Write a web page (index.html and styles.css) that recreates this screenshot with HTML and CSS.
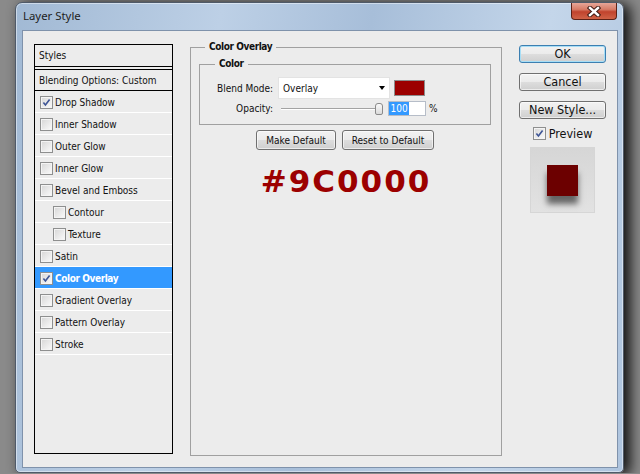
FILE: index.html
```html
<!DOCTYPE html>
<html lang="en">
<head>
  <meta charset="UTF-8">
  <meta name="viewport" content="width=device-width, initial-scale=1.0">
  <title>Layer Style</title>
  <link rel="stylesheet" href="styles.css">
</head>
<body>
  <div class="window">
    <div class="titlebar">
      <span class="title">Layer Style</span>
      <div class="close">
        <svg width="14" height="11" viewBox="0 0 14 11">
          <path d="M3 2 L11 9 M11 2 L3 9" stroke="#3d1a14" stroke-width="4.4" stroke-linecap="square" fill="none"/>
          <path d="M3 2 L11 9 M11 2 L3 9" stroke="#ffffff" stroke-width="2.4" stroke-linecap="square" fill="none"/>
        </svg>
      </div>
    </div>
    <div class="client">
      <div class="styles-list">
        <div class="list-head">Styles</div>
        <div class="list-blend">Blending Options: Custom</div>
        <div class="list-item"><span class="check"><svg width="9" height="9" viewBox="0 0 9 9"><path d="M1.4 4.6 L3.4 7 L7.6 1.4" fill="none" stroke="#3e5596" stroke-width="1.6"/></svg></span>Drop Shadow</div>
        <div class="list-item"><span class="check"></span>Inner Shadow</div>
        <div class="list-item"><span class="check"></span>Outer Glow</div>
        <div class="list-item"><span class="check"></span>Inner Glow</div>
        <div class="list-item"><span class="check"></span>Bevel and Emboss</div>
        <div class="list-item sub"><span class="check"></span>Contour</div>
        <div class="list-item sub"><span class="check"></span>Texture</div>
        <div class="list-item"><span class="check"></span>Satin</div>
        <div class="list-item active"><span class="check"><svg width="9" height="9" viewBox="0 0 9 9"><path d="M1.4 4.6 L3.4 7 L7.6 1.4" fill="none" stroke="#3e5596" stroke-width="1.6"/></svg></span>Color Overlay</div>
        <div class="list-item"><span class="check"></span>Gradient Overlay</div>
        <div class="list-item"><span class="check"></span>Pattern Overlay</div>
        <div class="list-item"><span class="check"></span>Stroke</div>
      </div>

      <fieldset class="group">
        <legend>Color Overlay</legend>
        <fieldset class="subgroup">
          <legend>Color</legend>
          <div class="field-row blend-row">
            <label class="field-label">Blend Mode:</label>
            <div class="select">Overlay<span class="arrow"></span></div>
            <div class="swatch"></div>
          </div>
          <div class="field-row opacity-row">
            <label class="field-label">Opacity:</label>
            <div class="slider"><span class="track"></span><span class="thumb"></span></div>
            <div class="num-input"><span class="selected">100</span></div>
            <span class="pct">%</span>
          </div>
        </fieldset>
        <div class="default-buttons">
          <button class="btn btn-make">Make Default</button>
          <button class="btn btn-reset">Reset to Default</button>
        </div>
        <div class="hex">#9C0000</div>
      </fieldset>

      <div class="actions">
        <button class="btn btn-big btn-default">OK</button>
        <button class="btn btn-big">Cancel</button>
        <button class="btn btn-big">New Style...</button>
        <label class="preview-toggle"><span class="check"><svg width="9" height="9" viewBox="0 0 9 9"><path d="M1.4 4.6 L3.4 7 L7.6 1.4" fill="none" stroke="#3e5596" stroke-width="1.6"/></svg></span>Preview</label>
        <div class="preview-box"><div class="preview-swatch"></div></div>
      </div>
    </div>
  </div>
</body>
</html>
```

FILE: styles.css
```css
body {
  margin: 0;
  background-color: #8a8a8a;
  font-family: "DejaVu Sans Condensed", "DejaVu Sans", sans-serif;
  font-size: 10px;
  color: #111;
  overflow: hidden;
}

/* window frame */
.window {
  margin: 2px 0 0 15px;
  width: 609px;
  height: 471px;
  box-sizing: border-box;
  border: 1px solid #4f5a69;
  border-radius: 7px 7px 5px 5px;
  padding: 0 5px 4px 6px;
  display: flex;
  flex-direction: column;
  background: linear-gradient(100deg, #a1b9d4 0%, #bdd0e6 30%, #a7bed9 52%, #c4d6ea 78%, #aec4de 100%);
  box-shadow: inset 0 0 0 1px rgba(255, 255, 255, 0.45), 6px 2px 14px rgba(0, 0, 0, 0.9);
}
.titlebar {
  height: 27px;
  display: flex;
  justify-content: space-between;
  align-items: flex-start;
}
.title {
  padding: 5px 0 0 1px;
  font-family: "Noto Sans", sans-serif;
  font-size: 11.4px;
  color: #1e1e1e;
}
.close {
  width: 46px;
  height: 17px;
  margin-right: 1px;
  box-sizing: border-box;
  border: 1px solid #5b2116;
  border-top: none;
  border-radius: 0 0 4px 4px;
  background: linear-gradient(#e6a698 0%, #d77b66 40%, #c0432d 55%, #cf6246 100%);
  display: flex;
  align-items: center;
  justify-content: center;
}
.client {
  flex: 1;
  background-color: #ececec;
  border: 1px solid #7f92ab;
  display: grid;
  grid-template-columns: 139px 312px 87px;
  column-gap: 17px;
  align-items: start;
  padding: 13px 0 0 11px;
}

/* styles list */
.styles-list {
  height: 410px;
  box-sizing: border-box;
  border: 1px solid #000;
}
.list-head {
  height: 21px;
  line-height: 22px;
  padding-left: 4px;
  border-bottom: 1px solid #000;
}
.list-blend {
  height: 20px;
  line-height: 21px;
  padding-left: 4px;
  margin-top: 2px;
  border-top: 1px solid #000;
  border-bottom: 1px solid #000;
}
.list-item {
  height: 21px;
  border-bottom: 1px solid #fff;
  display: flex;
  align-items: center;
  gap: 2px;
  padding-left: 5px;
  padding-top: 1px;
  box-sizing: border-box;
  height: 22px;
}
.list-item.sub {
  padding-left: 18px;
}
.list-item.active {
  background-color: #3399ff;
  color: #fff;
  font-weight: bold;
  letter-spacing: -0.4px;
}

.check {
  width: 13px;
  height: 13px;
  box-sizing: border-box;
  border: 1px solid #8e8f8f;
  background: linear-gradient(135deg, #d6d6d6, #fbfbfb);
  box-shadow: inset 0 0 0 1px #f4f4f4;
  display: inline-flex;
  align-items: center;
  justify-content: center;
  flex-shrink: 0;
}

/* color overlay group */
fieldset {
  margin: 0;
  min-width: 0;
  border: 1px solid #a0a0a0;
}
legend {
  font-weight: bold;
  letter-spacing: -0.4px;
  line-height: 12px;
  padding: 0 4px;
}
.group {
  margin-top: -3px;
  height: 415px;
  box-sizing: border-box;
  padding: 5px 10px 0 8px;
}
.group > legend {
  margin-left: 6px;
}
.subgroup {
  padding: 0 0 7px 0;
}
.subgroup > legend {
  margin-left: 15px;
}
.field-row {
  display: flex;
  align-items: center;
}
.blend-row {
  height: 22px;
  margin-top: 7px;
}
.opacity-row {
  height: 17px;
  margin-top: 1px;
}
.field-label {
  width: 73px;
  text-align: right;
}
.select {
  width: 112px;
  height: 22px;
  box-sizing: border-box;
  margin-left: 5px;
  background-color: #fff;
  border: 1px solid #e3e3e3;
  display: flex;
  align-items: center;
  justify-content: space-between;
  padding: 0 4px 0 4px;
}
.arrow {
  width: 0;
  height: 0;
  border-left: 3.5px solid transparent;
  border-right: 3.5px solid transparent;
  border-top: 4px solid #000;
}
.swatch {
  width: 31px;
  height: 16px;
  box-sizing: border-box;
  margin-left: 4px;
  background-color: #9c0000;
  border: 1px solid #8c8c8c;
}
.slider {
  width: 103px;
  margin-left: 8px;
  display: flex;
  align-items: center;
}
.track {
  width: 96px;
  height: 1px;
  background-color: #a3a3a3;
  border-bottom: 1px solid #fff;
}
.thumb {
  width: 8px;
  height: 12px;
  box-sizing: border-box;
  margin-left: -2px;
  border: 1px solid #8a8a8a;
  border-radius: 3px 3px 2px 2px;
  background: linear-gradient(#fafafa, #dadada);
}
.num-input {
  width: 38px;
  height: 15px;
  box-sizing: border-box;
  margin-left: 4px;
  background-color: #fff;
  border: 1px solid #b6bdc8;
  display: flex;
  align-items: center;
}
.selected {
  background-color: #3399ff;
  color: #fff;
  padding: 0 1.5px;
  line-height: 13px;
}
.pct {
  margin-left: 3px;
}
.default-buttons {
  margin-top: 5px;
  display: flex;
  justify-content: center;
  gap: 6px;
}
.hex {
  margin-top: 15px;
  text-align: center;
  font-family: "DejaVu Sans", sans-serif;
  font-weight: bold;
  font-size: 31px;
  line-height: 32px;
  letter-spacing: 2px;
  padding-left: 2px;
  color: #9c0000;
}

/* buttons */
.btn {
  height: 20px;
  padding: 0;
  box-sizing: border-box;
  font-family: "DejaVu Sans Condensed", "DejaVu Sans", sans-serif;
  font-size: 10px;
  color: #111;
  border: 1px solid #707070;
  border-radius: 3px;
  background: linear-gradient(#f2f2f2 0%, #ebebeb 50%, #dddddd 51%, #cfcfcf 100%);
  box-shadow: inset 0 0 0 1px rgba(255, 255, 255, 0.6);
}
.btn-make {
  width: 80px;
}
.btn-reset {
  width: 92px;
}

/* right column */
.actions {
  display: flex;
  flex-direction: column;
  margin-top: 1px;
  gap: 10px;
}
.btn-big {
  height: 18px;
  font-size: 12.5px;
  line-height: 16px;
}
.btn-default {
  border-color: #3c7fb1;
  box-shadow: inset 0 0 0 1px #a7def6;
}
.preview-toggle {
  align-self: center;
  margin-top: -2px;
  height: 13px;
  display: flex;
  align-items: center;
  gap: 3px;
  font-size: 12.5px;
}
.preview-box {
  align-self: center;
  margin-top: -3px;
  width: 65px;
  height: 66px;
  box-sizing: border-box;
  border: 1px solid #d6d6d6;
  background: linear-gradient(#d6d6d6, #e2e2e2);
  padding: 17px 0 0 16px;
}
.preview-swatch {
  width: 31px;
  height: 31px;
  background-color: #6c0000;
  box-shadow: 0 8px 6px rgba(0, 0, 0, 0.55);
}
```
